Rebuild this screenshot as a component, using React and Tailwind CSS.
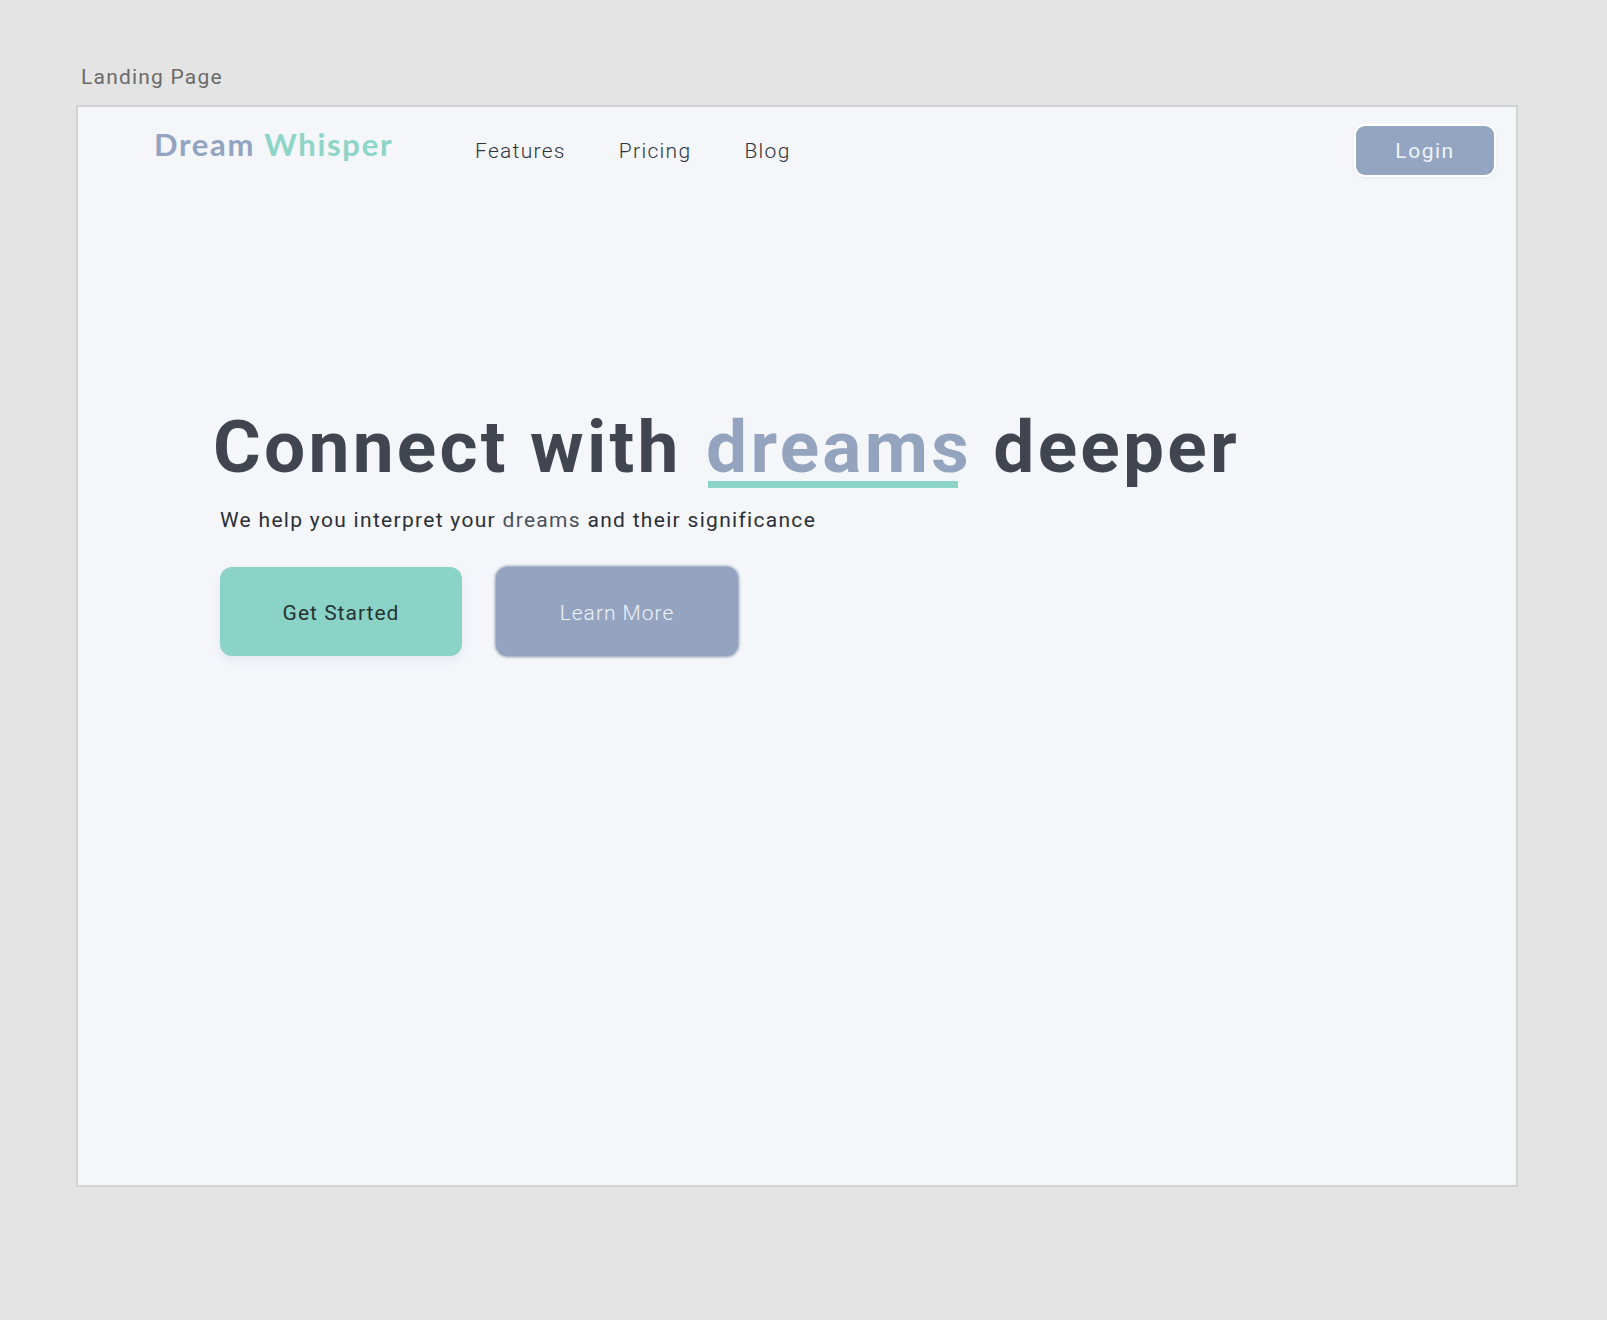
export default function App() {
  return (
    <div className="min-h-[1320px] bg-[#e4e4e4] pl-[76px] pt-[63px] font-['Roboto',sans-serif]">
      <div className="pl-[5px] text-[21px] leading-[28px] tracking-[1.2px] text-[#6b6b6b]">Landing Page</div>

      {/* frame */}
      <div className="mt-[14px] h-[1082px] w-[1442px] border-2 border-[#d2d2d2] bg-[#f4f6fa]">
        {/* header */}
        <div className="flex items-center pt-[19px]">
          <div className="mb-[13px] ml-[76px] w-[321px] font-['Lato',sans-serif] text-[31px] font-bold leading-none tracking-[1.7px]">
            <span className="text-[#93a4c0]">Dream</span> <span className="text-[#8dd5c6]">Whisper</span>
          </div>
          <nav className="mt-[2px] flex gap-[53px] text-[21px] font-light leading-none tracking-[1.3px] text-[#2f343c]">
            <a>Features</a>
            <a>Pricing</a>
            <a>Blog</a>
          </nav>
          <button className="ml-auto mr-[22px] h-[49px] w-[138px] rounded-[9px] bg-[#94a5c1] pt-[3px] text-[21px] tracking-[1.5px] text-[#f0f4fa] shadow-[0_1px_4px_rgba(120,135,165,0.35)] ring-2 ring-white">
            Login
          </button>
        </div>

        {/* hero */}
        <div className="mt-[236px] pl-[142px]">
          <h1 className="-ml-[7px] text-[73px] font-bold leading-none tracking-[3.25px] text-[#40454f]">
            Connect with{' '}
            <span className="relative ml-[3px] inline-block text-[#94a4bf]">
              dreams
              <span className="absolute -bottom-[4px] left-[2px] right-[14px] h-[7px] bg-[#8bd3c6]"></span>
            </span>{' '}
            deeper
          </h1>
          <p className="mt-[26px] text-[21px] leading-none tracking-[1.3px] text-[#2b2f36]">
            We help you interpret your <span className="text-[#4b515b]">dreams</span> and their significance
          </p>
          <div className="mt-[36px] flex gap-[34px]">
            <button className="h-[89px] w-[242px] rounded-[12px] bg-[#8bd3c7] pt-[4px] text-[21px] tracking-[1px] text-[#263232] shadow-[0_4px_10px_rgba(120,140,160,0.12)]">
              Get Started
            </button>
            <button className="h-[89px] w-[242px] rounded-[12px] bg-[#94a4c0] pt-[4px] text-[21px] font-light tracking-[1px] text-[#eef2fa] shadow-[0_0_3px_1px_rgba(125,140,170,0.9)]">
              Learn More
            </button>
          </div>
        </div>
      </div>
    </div>
  )
}
